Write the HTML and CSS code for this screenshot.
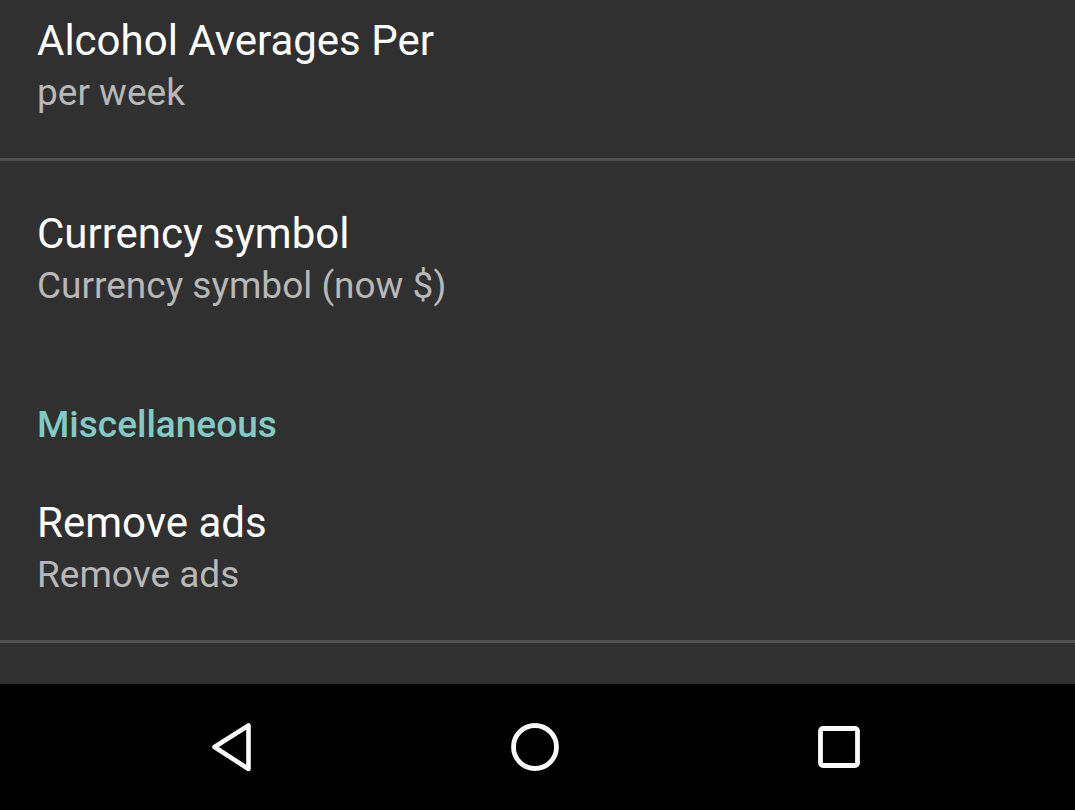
FILE: index.html
```html
<!DOCTYPE html>
<html>
<head>
<meta charset="utf-8">
<link rel="stylesheet" href="styles.css">
</head>
<body>
<div class="screen">
  <div class="list">
    <div class="pref first">
      <div class="title">Alcohol Averages Per</div>
      <div class="summary">per week</div>
    </div>
    <div class="divider"></div>
    <div class="pref">
      <div class="title">Currency symbol</div>
      <div class="summary">Currency symbol (now $)</div>
    </div>
    <div class="category">Miscellaneous</div>
    <div class="pref">
      <div class="title">Remove ads</div>
      <div class="summary">Remove ads</div>
    </div>
    <div class="divider"></div>
    <div class="pref-partial"></div>
  </div>
  <div class="navbar">
    <svg class="nav-icon" width="60" height="60" viewBox="0 0 60 60">
      <path d="M45.5 8.5 L45.5 52 L11.5 30 Z" fill="none" stroke="#fafafa" stroke-width="4.6" stroke-linejoin="round"/>
    </svg>
    <svg class="nav-icon" width="60" height="60" viewBox="0 0 60 60">
      <circle cx="30" cy="30" r="21.5" fill="none" stroke="#fafafa" stroke-width="4.8"/>
    </svg>
    <svg class="nav-icon" width="60" height="60" viewBox="0 0 60 60">
      <rect x="11.5" y="11.5" width="37" height="37" rx="2.5" fill="none" stroke="#fafafa" stroke-width="4.8"/>
    </svg>
  </div>
</div>
</body>
</html>
```
FILE: styles.css
```css
html, body {
  margin: 0;
  padding: 0;
  background: #303030;
}
.screen {
  width: 1075px;
  height: 810px;
  display: flex;
  flex-direction: column;
  overflow: hidden;
  font-family: Roboto, "Noto Sans", sans-serif;
}
.list {
  height: 684px;
  overflow: hidden;
  background: #303030;
  display: flex;
  flex-direction: column;
}
.pref {
  padding: 49px 37px 45px 37px;
  flex: none;
}
.pref.first {
  padding-top: 17px;
}
.title {
  color: #ffffff;
  font-size: 42px;
  line-height: 48px;
  height: 48px;
  white-space: nowrap;
}
.summary {
  color: #b8b8b8;
  font-size: 37px;
  line-height: 40px;
  margin-top: 8px;
  white-space: nowrap;
}
.divider {
  height: 3px;
  background: #4f4f4f;
  flex: none;
}
.category {
  padding: 54px 37px 5px 37px;
  color: #80cbc4;
  font-size: 37px;
  font-weight: 500;
  line-height: 40px;
  flex: none;
}
.pref-partial {
  flex: 1;
}
.navbar {
  height: 126px;
  background: #000000;
  display: flex;
  align-items: center;
  flex: none;
  padding-left: 203px;
  gap: 242px;
}
.nav-icon {
  display: block;
  flex: none;
}
.nav-icon:last-child {
  margin-left: 2px;
}
```
